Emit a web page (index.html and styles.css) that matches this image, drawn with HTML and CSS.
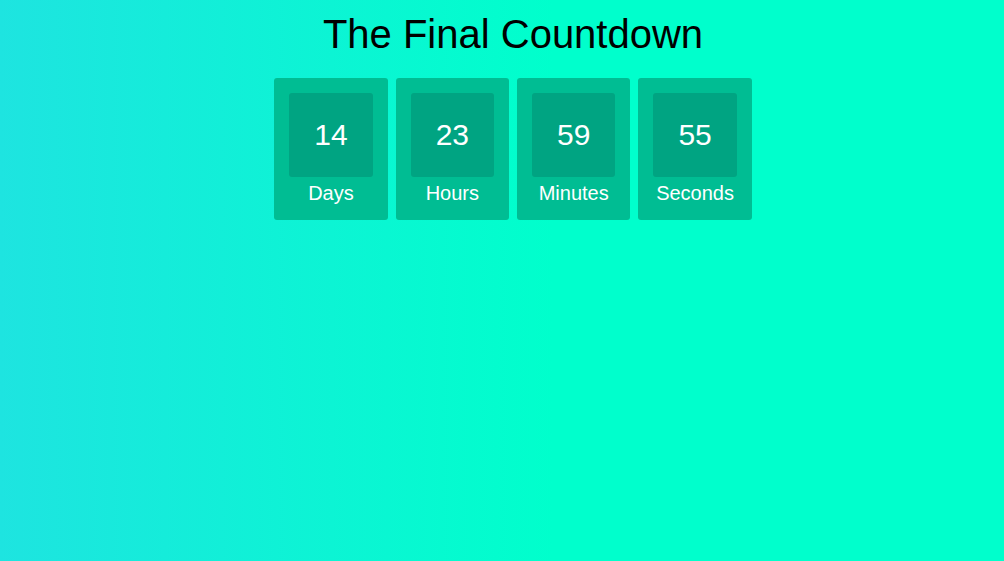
FILE: index.html
```html
<!DOCTYPE html>
<html>
<head>
<meta charset="utf-8">
<link rel="stylesheet" href="styles.css">
</head>
<body>
<div class="page">
  <h1 class="title">The Final Countdown</h1>
  <div class="clock">
    <div class="unit"><span class="num">14</span><div class="label">Days</div></div>
    <div class="unit"><span class="num">23</span><div class="label">Hours</div></div>
    <div class="unit"><span class="num">59</span><div class="label">Minutes</div></div>
    <div class="unit"><span class="num">55</span><div class="label">Seconds</div></div>
  </div>
</div>
</body>
</html>
```
FILE: styles.css
```css
html, body {
  height: 100%;
}
body {
  margin: 0;
  background: linear-gradient(90deg, #1ee4e0 0%, #00ffcc 55%, #00ffcc 100%);
  font-family: "Liberation Sans", Arial, sans-serif;
  text-align: center;
}
.page {
  padding: 8px 8px 0 30px;
}
.title {
  margin: 4px 0 21px;
  font-size: 40px;
  font-weight: normal;
  color: #000;
}
.clock {
  display: flex;
  justify-content: center;
  gap: 8px;
  color: #fff;
}
.unit {
  padding: 15px;
  border-radius: 3px;
  background: #00bd93;
}
.num {
  display: inline-block;
  padding: 25px;
  border-radius: 3px;
  background: #00a482;
  font-size: 30px;
}
.label {
  padding-top: 5px;
  font-size: 20px;
}
```
